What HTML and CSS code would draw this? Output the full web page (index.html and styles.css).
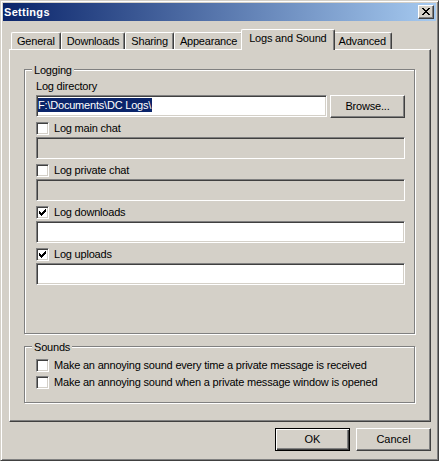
FILE: index.html
```html
<!DOCTYPE html>
<html>
<head>
<meta charset="utf-8">
<title>Settings</title>
<link rel="stylesheet" href="styles.css">
</head>
<body>
<div class="window">
  <div class="titlebar">
    <span class="title">Settings</span>
    <span class="close">
      <svg width="8" height="7" viewBox="0 0 8 7" shape-rendering="crispEdges"><path d="M0 0h2v1h-2zM6 0h2v1h-2zM1 1h2v1h-2zM5 1h2v1h-2zM2 2h4v1h-4zM3 3h2v1h-2zM2 4h4v1h-4zM1 5h2v1h-2zM5 5h2v1h-2zM0 6h2v1h-2zM6 6h2v1h-2z" fill="#000"/></svg>
    </span>
  </div>
  <div class="client">
    <div class="tabs">
      <div class="tab">General</div>
      <div class="tab">Downloads</div>
      <div class="tab">Sharing</div>
      <div class="tab">Appearance</div>
      <div class="tab active">Logs and Sound</div>
      <div class="tab">Advanced</div>
    </div>
    <div class="panel">
      <div class="group logging">
        <div class="group-title">Logging</div>
        <div class="label">Log directory</div>
        <div class="dir-row">
          <div class="edit dir"><span class="sel">F:\Documents\DC Logs\</span></div>
          <div class="btn">Browse...</div>
        </div>
        <div class="check"><span class="cb"></span><span>Log main chat</span></div>
        <div class="edit disabled"></div>
        <div class="check"><span class="cb"></span><span>Log private chat</span></div>
        <div class="edit disabled"></div>
        <div class="check"><span class="cb"><svg width="7" height="7" viewBox="0 0 7 7" shape-rendering="crispEdges"><path d="M6 0h1v1h-1zM5 1h2v1h-2zM0 2h1v1h-1zM4 2h3v1h-3zM0 3h2v1h-2zM3 3h3v1h-3zM0 4h5v1h-5zM1 5h3v1h-3zM2 6h1v1h-1z" fill="#000"/></svg></span><span>Log downloads</span></div>
        <div class="edit"></div>
        <div class="check"><span class="cb"><svg width="7" height="7" viewBox="0 0 7 7" shape-rendering="crispEdges"><path d="M6 0h1v1h-1zM5 1h2v1h-2zM0 2h1v1h-1zM4 2h3v1h-3zM0 3h2v1h-2zM3 3h3v1h-3zM0 4h5v1h-5zM1 5h3v1h-3zM2 6h1v1h-1z" fill="#000"/></svg></span><span>Log uploads</span></div>
        <div class="edit"></div>
      </div>
      <div class="group sounds">
        <div class="group-title">Sounds</div>
        <div class="check"><span class="cb"></span><span>Make an annoying sound every time a private message is received</span></div>
        <div class="check"><span class="cb"></span><span>Make an annoying sound when a private message window is opened</span></div>
      </div>
    </div>
    <div class="buttons">
      <div class="btn default">OK</div>
      <div class="btn">Cancel</div>
    </div>
  </div>
</div>
</body>
</html>
```
FILE: styles.css
```css
* { box-sizing: border-box; }
html, body { margin: 0; padding: 0; }
body {
  background: #d4d0c8;
  font-family: "Liberation Sans", Arial, sans-serif;
  font-size: 11px;
  line-height: 13px;
  color: #000;
}
.window {
  width: 439px;
  height: 461px;
  border: 1px solid;
  border-color: #d4d0c8 #404040 #404040 #d4d0c8;
  box-shadow: inset 1px 1px #fff, inset -1px -1px #808080;
  padding: 2px;
  background: #d4d0c8;
  display: flex;
  flex-direction: column;
}
.titlebar {
  height: 18px;
  flex: none;
  display: flex;
  align-items: center;
  justify-content: space-between;
  padding: 0 2px 0 1px;
  background: linear-gradient(to right, #0a246a, #a6caf0);
}
.title {
  color: #fff;
  font-weight: bold;
  line-height: 18px;
  letter-spacing: 0.3px;
}
.close {
  width: 16px;
  height: 14px;
  background: #d4d0c8;
  border: 1px solid;
  border-color: #fff #404040 #404040 #fff;
  box-shadow: inset -1px -1px #808080;
  padding: 2px 0 0 3px;
  display: flex;
  align-items: flex-start;
}
.close svg { display: block; }
.client {
  padding: 8px 0 0 6px;
}
.tabs {
  display: flex;
  align-items: flex-end;
  height: 20px;
  margin-left: 2px;
  letter-spacing: -0.2px;
}
.tab {
  height: 17px;
  padding: 2px 5px 1px;
  border: 1px solid;
  border-color: #fff #404040 transparent #fff;
  border-bottom: 0;
  border-radius: 2px 2px 0 0;
  box-shadow: inset -1px 0 #808080;
  white-space: nowrap;
  background: #d4d0c8;
}
.tab.active {
  height: 21px;
  padding: 2px 7px 5px;
  margin: 0 -2px -1px;
  position: relative;
  z-index: 1;
}
.panel {
  width: 422px;
  height: 373px;
  border: 1px solid;
  border-color: #fff #404040 #404040 #fff;
  box-shadow: inset -1px -1px #808080;
  padding: 19px 0 0 14px;
  letter-spacing: -0.2px;
}
.group {
  position: relative;
  width: 391px;
  border: 1px solid #808080;
  box-shadow: inset 1px 1px #fff, 1px 1px #fff;
  padding: 10px 9px 0 11px;
}
.group.logging { height: 265px; }
.group.sounds {
  height: 57px;
  margin-top: 12px;
  padding-top: 12px;
}
.group-title {
  position: absolute;
  top: -6px;
  left: 7px;
  padding: 0 2px;
  background: #d4d0c8;
  line-height: 13px;
}
.label { height: 13px; }
.dir-row {
  display: flex;
  gap: 3px;
  margin-top: 2px;
  height: 23px;
}
.edit {
  width: 369px;
  height: 22px;
  border: 1px solid;
  border-color: #808080 #fff #fff #808080;
  box-shadow: inset 1px 1px #404040, inset -1px -1px #d4d0c8;
  background: #fff;
  padding: 2px 1px;
}
.edit.dir { width: 291px; }
.edit.disabled { background: #d4d0c8; }
.sel {
  display: inline-block;
  background: #0a246a;
  color: #fff;
  line-height: 14px;
  padding: 0 1px 0 0;
}
.btn {
  width: 75px;
  height: 23px;
  flex: none;
  border: 1px solid;
  border-color: #fff #404040 #404040 #fff;
  box-shadow: inset -1px -1px #808080;
  display: flex;
  align-items: center;
  justify-content: center;
  background: #d4d0c8;
}
.btn.default {
  border-color: #000;
  box-shadow: inset 1px 1px #fff, inset -1px -1px #404040, inset -2px -2px #808080;
}
.check {
  display: flex;
  align-items: center;
  gap: 5px;
  height: 13px;
  margin: 5px 0 2px;
  white-space: nowrap;
}
.dir-row + .check { margin-top: 4px; }
.sounds .check { margin: 0 0 4px; }
.cb {
  width: 13px;
  height: 13px;
  flex: none;
  border: 1px solid;
  border-color: #808080 #fff #fff #808080;
  box-shadow: inset 1px 1px #404040, inset -1px -1px #d4d0c8;
  background: #fff;
  padding: 2px;
}
.cb svg { display: block; }
.buttons {
  display: flex;
  justify-content: flex-end;
  gap: 6px;
  width: 422px;
  margin-top: 6px;
}
```
